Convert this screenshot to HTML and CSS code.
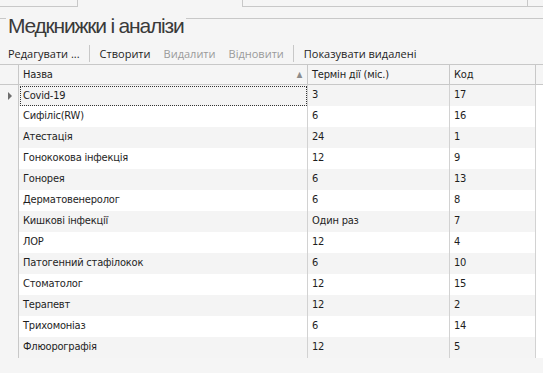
FILE: index.html
```html
<!DOCTYPE html>
<html lang="uk">
<head>
    <meta charset="UTF-8">
    <title>Медкнижки і аналізи</title>
    <link rel="stylesheet" href="styles.css">
</head>
<body>

    <!-- Смуга вкладок (видно лише нижній край) -->
    <div class="tabs">
        <div class="tab tab-first"></div>
        <div class="tab tab-active"></div>
        <div class="tab tab-next"></div>
        <div class="tab tab-rest"></div>
    </div>

    <!-- Заголовок групи -->
    <div class="group-title">
        <div class="group-line group-line-start"></div>
        <h1>Медкнижки і аналізи</h1>
        <div class="group-line"></div>
    </div>

    <!-- Панель дій -->
    <div class="toolbar">
        <span class="tool">Редагувати ...</span>
        <span class="tool-sep"></span>
        <span class="tool">Створити</span>
        <span class="tool disabled">Видалити</span>
        <span class="tool disabled">Відновити</span>
        <span class="tool-sep"></span>
        <span class="tool">Показувати видалені</span>
    </div>

    <!-- Таблиця -->
    <div class="grid">
        <div class="grid-row grid-head">
            <div class="cell row-head"></div>
            <div class="cell col-name">Назва <span class="sort">&#9650;</span></div>
            <div class="cell col-term">Термін дії (міс.)</div>
            <div class="cell col-code">Код</div>
            <div class="cell col-fill"></div>
        </div>
        <div id="rows"></div>
    </div>

    <script>
        // Дані таблиці
        var data = [
            ['Covid-19', '3', '17'],
            ['Сифіліс(RW)', '6', '16'],
            ['Атестація', '24', '1'],
            ['Гонококова інфекція', '12', '9'],
            ['Гонорея', '6', '13'],
            ['Дерматовенеролог', '6', '8'],
            ['Кишкові інфекції', 'Один раз', '7'],
            ['ЛОР', '12', '4'],
            ['Патогенний стафілокок', '6', '10'],
            ['Стоматолог', '12', '15'],
            ['Терапевт', '12', '2'],
            ['Трихомоніаз', '6', '14'],
            ['Флюорографія', '12', '5']
        ];

        var rows = document.getElementById('rows');
        data.forEach(function(item, i) {
            var row = document.createElement('div');
            row.className = 'grid-row' + (i % 2 === 0 ? ' odd' : '') + (i === 0 ? ' current' : '');
            row.innerHTML =
                '<div class="cell row-head">' + (i === 0 ? '<span class="marker"></span>' : '') + '</div>' +
                '<div class="cell col-name"><span class="text">' + item[0] + '</span></div>' +
                '<div class="cell col-term">' + item[1] + '</div>' +
                '<div class="cell col-code">' + item[2] + '</div>' +
                '<div class="cell col-fill"></div>';
            rows.appendChild(row);
        });
    </script>

</body>
</html>
```

FILE: styles.css
```css
/* Основа сторінки */
body {
    margin: 0;
    padding: 0;
    height: 100vh;
    background-color: #f5f5f5;
    font-family: "Open Sans", "Noto Sans", sans-serif;
    color: #1e1e1e;
    overflow: hidden;
}

/* Вкладки зверху */
.tabs {
    display: flex;
    height: 7px;
}

.tab {
    box-sizing: border-box;
    height: 7px;
    border-bottom: 1px solid #c8c8c8;
}

.tab-first {
    width: 78px;
    border-right: 1px solid #c8c8c8;
}

.tab-active {
    width: 164px;
    border-bottom: none;
}

.tab-next {
    width: 286px;
    border-left: 1px solid #c8c8c8;
    border-right: 1px solid #c8c8c8;
}

.tab-rest {
    flex: 1;
}

/* Заголовок групи */
.group-title {
    display: flex;
    align-items: flex-start;
    height: 36px;
}

.group-line {
    flex: 1;
    height: 11px;
    border-bottom: 1px solid #c8c8c8;
}

.group-line-start {
    flex: none;
    width: 6px;
}

.group-title h1 {
    margin: 0;
    padding: 5px 3px 0 2px;
    font-family: "Liberation Sans", Arial, sans-serif;
    font-size: 21px;
    font-weight: normal;
    letter-spacing: -1.2px;
    line-height: 28px;
    color: #3a3a3a;
}

/* Панель дій */
.toolbar {
    display: flex;
    align-items: center;
    height: 20px;
    padding-left: 8px;
    font-size: 11px;
    color: #1e1e1e;
}

.tool {
    margin-right: 13px;
}

.tool.disabled {
    color: #9a9a9a;
}

.tool-sep {
    width: 1px;
    height: 17px;
    background-color: #c8c8c8;
    margin: 0 10px 0 -4px;
}

/* Таблиця */
.grid {
    margin-top: 1px;
    border-top: 1px solid #c8c8c8;
    font-family: "DejaVu Sans Condensed", "DejaVu Sans", sans-serif;
    font-stretch: condensed;
    font-size: 11px;
    letter-spacing: -0.2px;
}

.grid-row {
    display: flex;
    height: 21px;
    background-color: #ffffff;
}

.grid-row.odd {
    background-color: #f4f4f4;
}

.cell {
    box-sizing: border-box;
    height: 21px;
    line-height: 20px;
    padding-left: 4px;
    border-right: 1px solid #d2d2d2;
    white-space: nowrap;
    overflow: hidden;
}

.row-head {
    width: 19px;
    background-color: #f5f5f5;
    border-right: 1px solid #c8c8c8;
    position: relative;
}

.col-name {
    width: 289px;
}

.col-term {
    width: 142px;
}

.col-code {
    width: 86px;
}

.col-fill {
    flex: 1;
    border-right: none;
    background-color: #ffffff;
}

/* Рядок заголовків */
.grid-head {
    height: 19px;
    background-color: #f5f5f5;
    border-bottom: 1px solid #c8c8c8;
}

.grid-head .cell {
    height: 19px;
    line-height: 19px;
    border-right-color: #c8c8c8;
}

.grid-head .col-fill {
    background-color: #f5f5f5;
}

.grid-head .col-name {
    display: flex;
    justify-content: space-between;
    padding-right: 5px;
}

.sort {
    font-size: 8px;
    color: #8c8c8c;
}

/* Поточний рядок */
.current .col-name {
    padding-left: 3px;
}

.current .col-name .text {
    display: block;
    margin: 1px 0 0 -2px;
    padding-left: 2px;
    height: 18px;
    line-height: 18px;
    border: 1px dotted #333333;
}

.marker {
    position: absolute;
    left: 8px;
    top: 7px;
    border-left: 4px solid #6e6e6e;
    border-top: 4px solid transparent;
    border-bottom: 4px solid transparent;
}
```
